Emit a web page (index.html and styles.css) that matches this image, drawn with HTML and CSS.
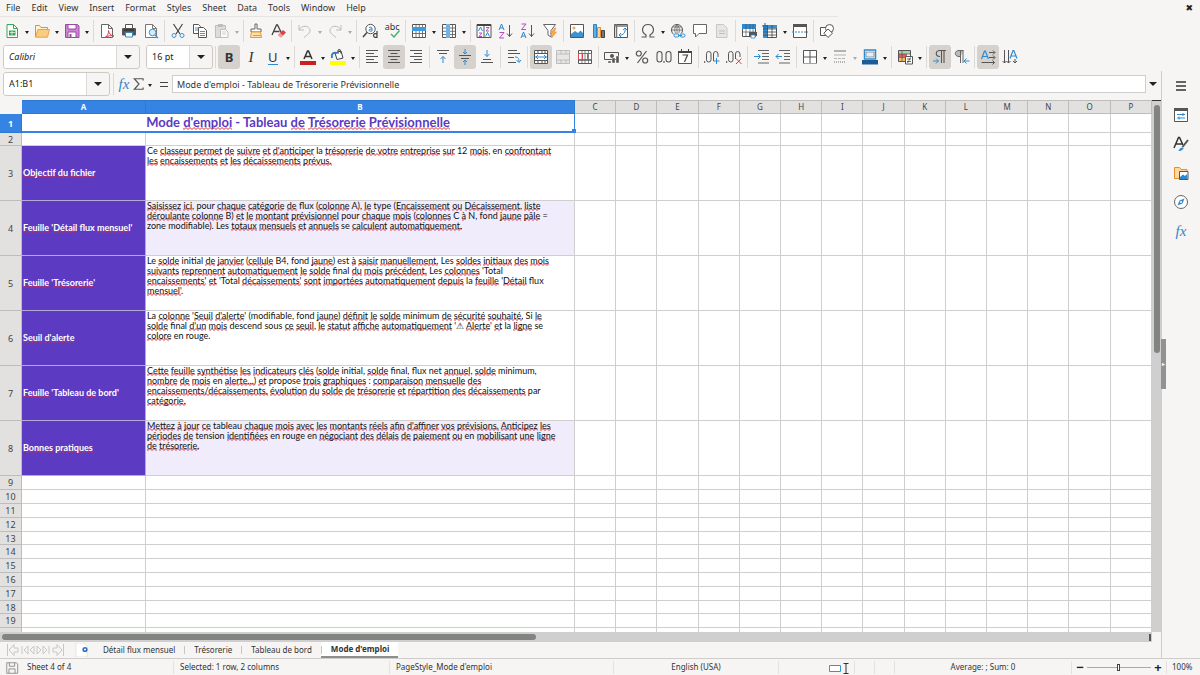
FILE: index.html
```html
<!DOCTYPE html>
<html lang="fr">
<head>
<meta charset="utf-8">
<title>Mode d'emploi - Tableau de Trésorerie Prévisionnelle</title>
<link rel="stylesheet" href="styles.css">
</head>
<body>
<nav class="menubar">
  <button>File</button><button>Edit</button><button>View</button><button>Insert</button><button>Format</button><button>Styles</button><button>Sheet</button><button>Data</button><button>Tools</button><button>Window</button><button>Help</button>
  <button class="close" aria-label="Close">✖</button>
</nav>

<div class="toolbar standard">
  <button class="tool" aria-label="New"><svg viewBox="0 0 16 16"><path d="M3 1.500h6.500l4 4v9H3z" fill="#fff" stroke="#36a852"/><path d="M9.500 1.500v4h4" fill="none" stroke="#36a852"/><path d="M5 7.500h6.500v5H5z" fill="#36a852"/><path d="M6 9.500h5M8 8v4" stroke="#fff" stroke-width=".7"/></svg></button><button class="drop" aria-label="New options"></button>
  <button class="tool" aria-label="Open"><svg viewBox="0 0 16 16"><path d="M1.500 14V2.500h4l1.500 2h6.500V7" fill="#fff3d6" stroke="#e0902f"/><path d="M1.500 14.200L4 6.500h11.500L13.500 14.200z" fill="#fbcb80" stroke="#eda144"/></svg></button><button class="drop" aria-label="Open options"></button>
  <button class="tool" aria-label="Save"><svg viewBox="0 0 16 16"><path d="M1.500 1.500h12l1.500 1.500v11.500H1.500z" fill="#cf83d6" stroke="#9a4aa5"/><path d="M4 1.500h8v4.500H4zM4 9h8v5.500H4z" fill="#fff" stroke="#9a4aa5"/><path d="M5.500 11h2v3.500h-2z" fill="#9a4aa5"/></svg></button><button class="drop" aria-label="Save options"></button>
  <i class="sep"></i>
  <button class="tool" aria-label="Export as PDF"><svg viewBox="0 0 16 16"><path d="M2.500 1.500h7l4 4v9h-11z" fill="#fff" stroke="#666"/><path d="M9.500 1.500v4h4" fill="none" stroke="#666"/><path d="M6 14.500c2-1 4-4 3.500-7 .5 3 2 5 5.500 5.500-3-.8-6-.2-9 1.500z" fill="#fff" stroke="#df3b4b"/></svg></button>
  <button class="tool" aria-label="Print"><svg viewBox="0 0 16 16"><path d="M4.500 1.500h7v4h-7z" fill="#fff" stroke="#555"/><rect x="1" y="5" width="14" height="7.500" rx="1" fill="#555"/><path d="M4.500 9.500h7v4.500h-7z" fill="#fff" stroke="#3f87b8"/><path d="M3 7h10" stroke="#222"/></svg></button>
  <button class="tool" aria-label="Print preview"><svg viewBox="0 0 16 16"><path d="M2.500 1.500h7l4 4v9h-11z" fill="#fff" stroke="#777"/><path d="M9.500 1.500v4h4" fill="none" stroke="#777"/><circle cx="9.500" cy="9.500" r="3.300" fill="#d5ebf8" stroke="#3f95cf"/><path d="M12 12l3 3" stroke="#3f95cf" stroke-width="1.300"/></svg></button>
  <i class="sep"></i>
  <button class="tool" aria-label="Cut"><svg viewBox="0 0 16 16" fill="none"><path d="M3.500 1l6.500 10M12.500 1L6 11" stroke="#444" stroke-width="1.200"/><circle cx="4" cy="12.500" r="2" stroke="#3a94d2"/><circle cx="12" cy="12.500" r="2" stroke="#3a94d2"/></svg></button>
  <button class="tool" aria-label="Copy"><svg viewBox="0 0 16 16"><path d="M1.500 1.500h5l2 2v7h-7z" fill="#fff" stroke="#555"/><path d="M3 5h3M3 7h3" stroke="#4a98cd"/><path d="M6.500 4.500h5l3 3v7h-8z" fill="#fff" stroke="#555"/><path d="M8 8.500h5M8 10.500h5M8 12.500h5" stroke="#4a98cd"/></svg></button>
  <button class="tool off" aria-label="Paste"><svg viewBox="0 0 16 16"><path d="M1.500 2.500h10v12h-10z" fill="#ccc" stroke="#999"/><path d="M4 1h5v3H4z" fill="#999"/><path d="M6.500 6.500h5l2.500 2.500v5.500H6.500z" fill="#fff" stroke="#999"/><path d="M8 9h4M8 11h4" stroke="#bbb"/></svg></button><button class="drop off" aria-label="Paste options"></button>
  <i class="sep"></i>
  <button class="tool" aria-label="Clone formatting"><svg viewBox="0 0 16 16"><path d="M7 1h2v5h4v3H3V6h4z" fill="#fff" stroke="#666"/><path d="M3.500 9l-1 5.500h11L12.500 9z" fill="#fde0b0" stroke="#ea9a38"/><path d="M5 12.500h8" stroke="#ea9a38"/></svg></button>
  <button class="tool" aria-label="Clear formatting"><svg viewBox="0 0 16 16"><path d="M2 12L6.500 2h1L12 11M3.500 8.500h6" fill="none" stroke="#444" stroke-width="1.300"/><path d="M8 12l5-5 3 2.500-5 5z" fill="#e33f47"/><path d="M8 12l2-2 3 2.500-2 2z" fill="#f3a0a5"/></svg></button>
  <i class="sep"></i>
  <button class="tool off" aria-label="Undo"><svg viewBox="0 0 16 16" fill="none" stroke="#999"><path d="M2 2v5h5M2 7c2.500-5 10-5 11 0 .5 3-3 5-6 7.500"/></svg></button><button class="drop off" aria-label="Undo options"></button>
  <button class="tool off" aria-label="Redo"><svg viewBox="0 0 16 16" fill="none" stroke="#999"><path d="M14 2v5H9M14 7C11.500 2 4 2 3 7c-.5 3 3 5 6 7.500"/></svg></button><button class="drop off" aria-label="Redo options"></button>
  <i class="sep"></i>
  <button class="tool" aria-label="Find and replace"><svg viewBox="0 0 16 16" fill="none"><circle cx="8.500" cy="6" r="4.700" fill="#fff" stroke="#555"/><path d="M5 9.500L1 14" stroke="#444" stroke-width="1.500"/><path d="M7 4.500c2-1 3 0 3 1V8C8 8.500 7 8 7 7s2-1 3-1" stroke="#2a7fc9"/><path d="M15 8v7M15 11.500c-1-1.500-3.500-1-3.500 1s2.500 2.500 3.500 1" stroke="#444" stroke-width="1.200"/></svg></button>
  <button class="tool" aria-label="Spelling"><span class="abc">abc</span><svg viewBox="0 0 16 16" class="tick"><path d="M7 11l3 3 5.500-6.500" fill="none" stroke="#41b263" stroke-width="1.400"/></svg></button>
  <i class="sep"></i>
  <button class="tool" aria-label="Row"><svg viewBox="0 0 16 16"><path d="M1.500 1.500h13v13h-13z" fill="#fff" stroke="#555"/><path d="M1.500 10.500h13M5 1.500v13M8.300 1.500v13M11.500 1.500v13" stroke="#555" stroke-width=".8"/><path d="M1 4h14v4H1z" fill="#3c9be0"/></svg></button><button class="drop" aria-label="Row options"></button>
  <button class="tool" aria-label="Column"><svg viewBox="0 0 16 16"><path d="M1.500 1.500h13v13h-13z" fill="#fff" stroke="#555"/><path d="M11.500 1.500v13M1.500 5h13M1.500 8.300h13M1.500 11.500h13" stroke="#555" stroke-width=".8"/><path d="M5 1h4v14H5z" fill="#6bb5ea"/></svg></button><button class="drop" aria-label="Column options"></button>
  <i class="sep"></i>
  <button class="tool" aria-label="Sort"><svg viewBox="0 0 16 16" fill="none"><path d="M1 1.500h14v13H1zM8 2v12" fill="#fff" stroke="#555"/><path d="M1 2h14" stroke="#444" stroke-width="2"/><path d="M2.500 8L4.500 4l2 4M9.500 13.500l2-4 2 4" stroke="#2e86cf"/><path d="M3 10h3L3 13.500h3M10 4.500h3l-3 3.500h3" stroke="#b44fbd"/></svg></button>
  <button class="tool" aria-label="Sort ascending"><svg viewBox="0 0 16 16" fill="none"><path d="M1 7l2.500-6L6 7M2 5h3" stroke="#2e86cf"/><path d="M1.500 9.500H6L1.500 15H6" stroke="#b44fbd"/><path d="M11.500 2v11.500M9 10.500l2.500 3 2.500-3" stroke="#555"/></svg></button>
  <button class="tool" aria-label="Sort descending"><svg viewBox="0 0 16 16" fill="none"><path d="M1.500 1H6L1.500 6.500H6" stroke="#b44fbd"/><path d="M1 15l2.500-6L6 15M2 13h3" stroke="#2e86cf"/><path d="M11.500 2v11.500M9 10.500l2.500 3 2.500-3" stroke="#555"/></svg></button>
  <button class="tool" aria-label="AutoFilter"><svg viewBox="0 0 16 16"><path d="M1.500 1.500h12L9 7.500V14l-3-2V7.500z" fill="#fff" stroke="#666"/><path d="M12.500 5L8.500 10.500h2.500L9.500 15l5-6h-2.500L14 5z" fill="#fba949" stroke="#e28724" stroke-width=".5"/></svg></button>
  <i class="sep"></i>
  <button class="tool" aria-label="Image"><svg viewBox="0 0 16 16"><path d="M1.500 1.500h13v13h-13z" fill="#fff" stroke="#555"/><circle cx="5" cy="5" r="1.500" fill="#f4a94a"/><path d="M2 14v-3l4-3 3 2 2.500-2.500L14 10v4z" fill="#3d93d2"/></svg></button>
  <button class="tool" aria-label="Chart"><svg viewBox="0 0 16 16"><path d="M2.500 1.500h3v13h-3z" fill="#60b0ea" stroke="#2f80c0"/><path d="M6.500 4.500h3v10h-3z" fill="#fbd09a" stroke="#e28b2b"/><path d="M10.500 7.500h3v7h-3z" fill="#777" stroke="#444"/></svg></button>
  <button class="tool" aria-label="Pivot table"><svg viewBox="0 0 16 16" fill="none"><path d="M1.500 1.500h13v13h-13z" fill="#fff" stroke="#555"/><path d="M1 3h14M3.500 1v14" stroke="#777" stroke-width="1.500"/><path d="M12 5c1 4-2 8-6 7M10 7l2-2 2 2M8 10l-2 2 2 2" stroke="#2e8bd0"/></svg></button>
  <i class="sep"></i>
  <button class="tool" aria-label="Special character"><svg viewBox="0 0 16 16"><path d="M1.500 14H6v-2C0 8.500 2.500 1.500 8 1.500s8 7 2 10.500v2h4.500" fill="none" stroke="#555" stroke-width="1.200"/></svg></button><button class="drop" aria-label="Special character options"></button>
  <button class="tool" aria-label="Hyperlink"><svg viewBox="0 0 16 16" fill="none"><circle cx="7" cy="7" r="5.500" stroke="#555"/><path d="M7 1.500c-3 3-3 8 0 11M7 1.500c3 3 3 7 1 10M1.500 7h11M2.500 4h9M7 1.500v11" stroke="#555" stroke-width=".7"/><path d="M3.500 10.500H15v4H3.500z" fill="#f5f4f2"/><rect x="4" y="11" width="5" height="3" rx="1.500" stroke="#2e8bd0"/><rect x="10" y="11" width="5" height="3" rx="1.500" stroke="#2e8bd0"/><path d="M8 12.500h4" stroke="#2e8bd0"/></svg></button>
  <button class="tool" aria-label="Comment"><svg viewBox="0 0 16 16"><path d="M1.500 1.500h13v9H7L3.500 14v-3.500h-2z" fill="#fff" stroke="#666"/></svg></button>
  <button class="tool off" aria-label="Headers and footers"><svg viewBox="0 0 16 16"><path d="M2.500 1.500h7l3.500 3.500v9.500H2.500z" fill="#ddd" stroke="#aaa"/><path d="M5 8h6M5 10.500h6" stroke="#999"/></svg></button>
  <i class="sep"></i>
  <button class="tool" aria-label="Print area"><svg viewBox="0 0 16 16"><path d="M1.500 1.500h13v12h-13z" fill="#fff" stroke="#555"/><path d="M1 1h14v5H1z" fill="#2e8bd0"/><path d="M1.500 9h13M5 1v12M9 1v12M12 1v9" stroke="#555" stroke-width=".7"/><rect x="8" y="9" width="8" height="4" fill="#555"/><path d="M10 12h4v3h-4z" fill="#fff" stroke="#3a8ed0" stroke-width=".8"/></svg></button>
  <button class="tool" aria-label="Freeze"><svg viewBox="0 0 16 16"><path d="M1.500 2.500h13v12h-13z" fill="#fff" stroke="#555"/><path d="M1 2h14v3.500H5.500V15H1z" fill="#3591da"/><path d="M5.500 2v13M10 2v13M1 6h14M1 9h14M1 12h14" stroke="#444" stroke-width=".8"/><path d="M3 0v6M0 3h6" stroke="#1769aa"/></svg></button><button class="drop" aria-label="Freeze options"></button>
  <button class="tool" aria-label="Split window"><svg viewBox="0 0 16 16"><path d="M1.500 1.500h13v13h-13z" fill="#fff" stroke="#555"/><path d="M1 2.500h14" stroke="#555" stroke-width="3"/><path d="M0 9h16" stroke="#2e8bd0" stroke-dasharray="2 1"/></svg></button>
  <i class="sep"></i>
  <button class="tool" aria-label="Draw functions"><svg viewBox="0 0 16 16" fill="#fff" stroke="#555"><path d="M1.500 4.500h9v8h-9z"/><circle cx="10.500" cy="5.500" r="4"/><path d="M9 6l4.500 4.200L9 14.500 4.800 10.200z"/></svg></button>
</div>

<div class="toolbar formatting">
  <div class="combo font-name"><input aria-label="Font name" value="Calibri"><button class="more" aria-label="Font list"></button></div>
  <div class="combo font-size"><input aria-label="Font size" value="16 pt"><button class="more" aria-label="Size list"></button></div>
  <i class="sep"></i>
  <div class="format-tools">
  <button class="tool on" aria-label="Bold"><b class="letter">B</b></button>
  <button class="tool" aria-label="Italic"><em class="letter serif">I</em></button>
  <button class="tool" aria-label="Underline"><span class="letter under">U</span></button><button class="drop" aria-label="Underline options"></button>
  <i class="sep"></i>
  <button class="tool" aria-label="Font color"><svg viewBox="0 0 16 16"><path d="M4 10L7.500 2h1L12 10M5 7.500h6" fill="none" stroke="#333" stroke-width="1.500"/><path d="M0 12h16v4H0z" fill="#c9211e"/></svg></button><button class="drop" aria-label="Font color options"></button>
  <button class="tool" aria-label="Highlighting"><svg viewBox="0 0 16 16"><path d="M5 4l6-2 2 7-6 1.500z" fill="#fff" stroke="#444"/><path d="M2 9c-1-4 1-6 5-5" fill="none" stroke="#2e7fc6" stroke-width="2"/><path d="M8 5V1l2-.5 1 4" fill="none" stroke="#444"/><path d="M0 12h16v4H0z" fill="#ffff00"/></svg></button><button class="drop" aria-label="Highlighting options"></button>
  <i class="sep"></i>
  <button class="tool" aria-label="Align left"><svg viewBox="0 0 16 16"><path d="M2 1.500h12M2 4.500h8M2 7.500h12M2 10.500h8M2 13.500h12" stroke="#555"/></svg></button>
  <button class="tool on" aria-label="Center"><svg viewBox="0 0 16 16"><path d="M2 1.500h12M4.500 4.500h7M2 7.500h12M4.500 10.500h7M2 13.500h12" stroke="#555"/></svg></button>
  <button class="tool" aria-label="Align right"><svg viewBox="0 0 16 16"><path d="M2 1.500h12M6 4.500h8M2 7.500h12M6 10.500h8M2 13.500h12" stroke="#555"/></svg></button>
  <i class="sep"></i>
  <button class="tool" aria-label="Align top"><svg viewBox="0 0 16 16" fill="none"><path d="M2 1.500h12M4 4.500h8" stroke="#555"/><path d="M8 14V7.500M5.500 10L8 7.500l2.500 2.500" stroke="#2e8bd0"/></svg></button>
  <button class="tool on" aria-label="Center vertically"><svg viewBox="0 0 16 16" fill="none"><path d="M2 6.500h12M4 9.500h8" stroke="#555"/><path d="M8 0v5M6 3l2 2 2-2M8 16v-5M6 13l2-2 2 2" stroke="#2e8bd0"/></svg></button>
  <button class="tool" aria-label="Align bottom"><svg viewBox="0 0 16 16" fill="none"><path d="M4 10.500h8M2 13.500h12" stroke="#555"/><path d="M8 1v6.500M5.500 5L8 7.500 10.500 5" stroke="#2e8bd0"/></svg></button>
  <i class="sep"></i>
  <button class="tool" aria-label="Wrap text"><svg viewBox="0 0 16 16" fill="none"><path d="M2 1.500h9M2 4.500h12M2 8.500h6M2 13.500h8" stroke="#555"/><path d="M9 8c3 0 4 1 4 5M10.500 11l2.500 2.500 2-2.500" stroke="#2e8bd0"/></svg></button>
  <i class="sep"></i>
  <button class="tool on" aria-label="Merge and center"><svg viewBox="0 0 16 16" fill="none"><path d="M1.500 1.500h13v13h-13z" fill="#fff" stroke="#555"/><path d="M2 4.500h12M2 11.500h12M5 2v3M9 2v3M12 2v3M5 11v3M9 11v3M12 11v3" stroke="#555"/><path d="M2 8h12M5 6L3 8l2 2M11 6l2 2-2 2" stroke="#2e8bd0"/></svg></button>
  <button class="tool off" aria-label="Merge cells"><svg viewBox="0 0 16 16"><path d="M1.500 1.500h13v13h-13z" fill="#ddd" stroke="#999"/><path d="M2 5h12M2 11h12M6 2v3M11 2v3M6 11v3M11 11v3" stroke="#999"/></svg></button>
  <button class="tool" aria-label="Unmerge cells"><svg viewBox="0 0 16 16"><path d="M1.500 1.500h13v13h-13z" fill="#fff" stroke="#555"/><path d="M5 2v12M8 2v12M11.500 2v12M2 11.500h12" stroke="#555" stroke-width=".7"/><path d="M1.500 4.500h13v6h-13zM5.500 5v5M10.500 5v5" fill="none" stroke="#df4850"/></svg></button>
  <i class="sep"></i>
  <button class="tool" aria-label="Currency"><svg viewBox="0 0 16 16" fill="none"><path d="M.500 3.500h14v7H.500z" stroke="#555"/><circle cx="8" cy="7" r="2" fill="#555"/><path d="M4 12h3v2H4zM8 9h3v5H8zM12 7h3v7h-3z" fill="#555" stroke="#fff" stroke-width=".4"/></svg></button><button class="drop" aria-label="Currency options"></button>
  <button class="tool" aria-label="Percent"><svg viewBox="0 0 16 16" fill="none" stroke="#555" stroke-width="1.200"><circle cx="4.800" cy="4.500" r="2.500"/><circle cx="11.200" cy="11.500" r="2.500"/><path d="M12.500 2l-9 12"/></svg></button>
  <button class="tool" aria-label="Number"><svg viewBox="0 0 16 16" fill="none" stroke="#555" stroke-width="1.100"><rect x="1" y="2.500" width="5" height="10.500" rx="2.500"/><rect x="10" y="2.500" width="5" height="10.500" rx="2.500"/><path d="M8 12v2"/></svg></button>
  <button class="tool" aria-label="Date"><svg viewBox="0 0 16 16" fill="none"><path d="M1.500 2.500h13v12h-13z" fill="#fff" stroke="#555"/><path d="M1 3h14" stroke="#444" stroke-width="2"/><path d="M4.500 0v3M11.500 0v3" stroke="#444"/><path d="M5.500 6h5L7.500 13" stroke="#444" stroke-width="1.200"/></svg></button>
  <i class="sep"></i>
  <button class="tool" aria-label="Add decimal place"><svg viewBox="0 0 16 16" fill="none"><path d="M.700 12v2" stroke="#555"/><rect x="2.500" y="2.500" width="4.500" height="10.500" rx="2.200" stroke="#555"/><path d="M9.500 12V5q0-2.500 2.200-2.500T14 5v3" stroke="#555"/><path d="M12.500 9v6M9.500 12h6" stroke="#2e8bd0"/></svg></button>
  <button class="tool" aria-label="Delete decimal place"><svg viewBox="0 0 16 16" fill="none"><path d="M.700 12v2" stroke="#555"/><rect x="2.500" y="2.500" width="4.500" height="10.500" rx="2.200" stroke="#555"/><path d="M9.500 10V5q0-2.500 2.200-2.500T14 5v3" stroke="#555"/><path d="M10 9.500l5.500 5.500M15.500 9.500L10 15" stroke="#df3b44"/></svg></button>
  <i class="sep"></i>
  <button class="tool" aria-label="Increase indent"><svg viewBox="0 0 16 16" fill="none"><path d="M5 1.500h11M9 4.500h7M9 7.500h7M9 10.500h7M5 14h11" stroke="#666"/><path d="M1 7.500h6M5 5l2.500 2.500L5 10" stroke="#2e8bd0"/></svg></button>
  <button class="tool" aria-label="Decrease indent"><svg viewBox="0 0 16 16" fill="none"><path d="M4 1.500h11M9 4.500h6M9 7.500h6M9 10.500h6M4 14h11" stroke="#666"/><path d="M7 7.500H1M3.500 5L1 7.500 3.500 10" stroke="#2e8bd0"/></svg></button>
  <i class="sep"></i>
  <button class="tool" aria-label="Borders"><svg viewBox="0 0 16 16"><path d="M1.500 1.500h13v13h-13zM8 2v12M2 8h12" fill="#fff" stroke="#555"/><path d="M1 14.500h14" stroke="#e99442"/></svg></button><button class="drop" aria-label="Borders options"></button>
  <button class="tool off" aria-label="Border style"><svg viewBox="0 0 16 16"><path d="M2 2h12" stroke="#888" stroke-width="2"/><path d="M2 6h12" stroke="#888"/><path d="M2 9.500h12" stroke="#888" stroke-dasharray="3 1"/><path d="M2 13h12" stroke="#888" stroke-width="2" stroke-dasharray="1 1"/></svg></button><button class="drop off" aria-label="Border style options"></button>
  <button class="tool" aria-label="Border color"><svg viewBox="0 0 16 16"><path d="M2.500 1h11v9h-11z" fill="#fff" stroke="#2e8bd0" stroke-width="1.500"/><path d="M4 3h8v5H4z" fill="#e4eef5" stroke="#777" stroke-width=".7"/><path d="M0 11h16v4.500H0z" fill="#1e5c97"/></svg></button><button class="drop" aria-label="Border color options"></button>
  <i class="sep"></i>
  <button class="tool" aria-label="Conditional formatting"><svg viewBox="0 0 16 16"><path d="M1.500 1.500h12v11h-12z" fill="#fff" stroke="#555"/><path d="M2 2h11v3H2z" fill="#9dd8ac"/><path d="M2 5h8v3H2z" fill="#e7585d"/><path d="M2 8h6v4H2z" fill="#f6b968"/><path d="M1.500 5h12M1.500 8.500h8M5 2v10" stroke="#555" stroke-width=".7"/><path d="M8.500 7.500h7v7.500h-7z" fill="#fff" stroke="#555"/><path d="M10 10h4M10 12.500h4M13.500 8.500l-3 5.500" stroke="#444" stroke-width=".8"/></svg></button><button class="drop" aria-label="Conditional formatting options"></button>
  <i class="sep"></i>
  <button class="tool on" aria-label="Left to right"><svg viewBox="0 0 16 16" fill="none"><path d="M14 1.500H8c-5 0-5 6 0 6M9.500 1.500V14M12 1.500V14" stroke="#555" stroke-width="1.100"/><path d="M1 12h5.500M4 9.500L6.500 12 4 14.500" stroke="#2e8bd0"/></svg></button>
  <button class="tool" aria-label="Right to left"><svg viewBox="0 0 16 16" fill="none"><path d="M9.500 1.500H5c-5 0-5 6 0 6h1.500" fill="#bbb" stroke="#666"/><path d="M6.500 1.500V14M9 1.500V14" stroke="#666"/><path d="M15.500 12H10M12.500 9.500L10 12l2.500 2.500" stroke="#2e8bd0"/></svg></button>
  <i class="sep"></i>
  <button class="tool on" aria-label="Horizontal text"><svg viewBox="0 0 16 16" fill="none"><path d="M1.500 10L4.500 2h.8L8.500 10M2.500 7.500h5" stroke="#2e8bd0" stroke-width="1.200"/><path d="M9 3.500h5.500M13 1.500l2 2-2 2M9 8.500h5.500M13 6.500l2 2-2 2M1.500 13.500h13M12.500 11.500l2 2-2 2" stroke="#555"/></svg></button>
  <button class="tool" aria-label="Vertical text"><svg viewBox="0 0 16 16" fill="none"><path d="M8 9.500L11 1.500h.8L15 9.500M9 7h5" stroke="#2e8bd0" stroke-width="1.200"/><path d="M2.500 1v13M.500 12l2 2 2-2M6.500 1v13M4.500 12l2 2 2-2M13 10v4M11 12l2 2 2-2" stroke="#555"/></svg></button>
  </div>
</div>

<div class="work">
  <div class="document">
    <div class="formula-bar">
      <div class="combo name-box"><input aria-label="Name box" value="A1:B1"><button class="more" aria-label="Name list"></button></div>
      <i class="sep"></i>
      <button class="fx" aria-label="Function wizard">fx</button>
      <button class="sigma" aria-label="Select function"><svg viewBox="0 0 12 12"><path d="M9.500 3V1.500H2L6 6 2 10.500h7.500V9" fill="none" stroke="#555"/></svg></button><button class="drop" aria-label="Function options"></button>
      <button class="equals" aria-label="Formula"></button>
      <input class="formula" aria-label="Formula input" value="Mode d'emploi - Tableau de Trésorerie Prévisionnelle">
      <button class="more" aria-label="Expand formula bar"></button>
    </div>
    <div class="sheet-area">
      <div class="sheet">
        <table class="grid">
          <colgroup><col class="c-head"><col class="c-a"><col class="c-b"><col span="14"></colgroup>
          <thead><tr><th></th><th class="sel">A</th><th class="sel">B</th><th>C</th><th>D</th><th>E</th><th>F</th><th>G</th><th>H</th><th>I</th><th>J</th><th>K</th><th>L</th><th>M</th><th>N</th><th>O</th><th>P</th></tr></thead>
          <tbody>
          <tr class="r-title"><th class="sel">1</th><td class="title" colspan="2">Mode <u>d'emploi</u> - Tableau <u>de</u> <u>Trésorerie</u> <u>Prévisionnelle</u></td><td><td><td><td><td><td><td><td><td><td><td><td><td><td></tr>
          <tr class="r-gap"><th>2</th><td><td><td><td><td><td><td><td><td><td><td><td><td><td><td><td></tr>
          <tr class="r-text"><th>3</th><td class="key"><u>Objectif</u> <u>du</u> <u>fichier</u></td><td class="text">Ce <u>classeur</u> <u>permet</u> <u>de</u> <u>suivre</u> <u>et</u> <u>d'anticiper</u> la <u>trésorerie</u> <u>de votre</u> <u>entreprise</u> <u>sur</u> 12 <u>mois</u>, en <u>confrontant</u><br><u>les</u> <u>encaissements</u> <u>et</u> <u>les</u> <u>décaissements</u> <u>prévus.</u></td><td><td><td><td><td><td><td><td><td><td><td><td><td><td></tr>
          <tr class="r-text alt"><th>4</th><td class="key"><u>Feuille</u> '<u>Détail</u> flux <u>mensuel</u>'</td><td class="text"><u>Saisissez</u> <u>ici</u>, pour <u>chaque</u> <u>catégorie</u> <u>de</u> flux (<u>colonne</u> A), <u>le</u> type (<u>Encaissement</u> <u>ou</u> <u>Décaissement</u>, <u>liste</u><br><u>déroulante</u> <u>colonne</u> B) <u>et</u> <u>le</u> <u>montant</u> <u>prévisionnel</u> pour <u>chaque</u> <u>mois</u> (<u>colonnes</u> C <u>à</u> N, fond <u>jaune</u> <u>pâle</u> =<br>zone modifiable). Les <u>totaux</u> <u>mensuels</u> <u>et</u> <u>annuels</u> se <u>calculent</u> <u>automatiquement.</u></td><td><td><td><td><td><td><td><td><td><td><td><td><td><td></tr>
          <tr class="r-text"><th>5</th><td class="key"><u>Feuille</u> '<u>Trésorerie</u>'</td><td class="text">Le <u>solde</u> initial <u>de</u> <u>janvier</u> (<u>cellule</u> B4, fond <u>jaune</u>) est <u>à</u> <u>saisir</u> <u>manuellement.</u> Les <u>soldes</u> <u>initiaux</u> <u>des</u> <u>mois</u><br><u>suivants</u> <u>reprennent</u> <u>automatiquement</u> <u>le</u> <u>solde</u> final <u>du</u> <u>mois</u> <u>précédent.</u> Les <u>colonnes</u> 'Total<br><u>encaissements'</u> <u>et</u> 'Total <u>décaissements'</u> <u>sont</u> <u>importées</u> <u>automatiquement</u> <u>depuis</u> la <u>feuille</u> '<u>Détail</u> flux<br><u>mensuel'</u>.</td><td><td><td><td><td><td><td><td><td><td><td><td><td><td></tr>
          <tr class="r-text"><th>6</th><td class="key"><u>Seuil</u> <u>d'alerte</u></td><td class="text">La <u>colonne</u> '<u>Seuil</u> <u>d'alerte</u>' (modifiable, fond <u>jaune</u>) <u>définit</u> <u>le</u> <u>solde</u> minimum <u>de</u> <u>sécurité</u> <u>souhaité.</u> Si <u>le</u><br><u>solde</u> final <u>d'un</u> <u>mois</u> descend sous <u>ce</u> <u>seuil</u>, <u>le</u> <u>statut</u> <u>affiche</u> <u>automatiquement</u> '⚠ <u>Alerte</u>' <u>et</u> la <u>ligne</u> se<br><u>colore</u> en rouge.</td><td><td><td><td><td><td><td><td><td><td><td><td><td><td></tr>
          <tr class="r-text"><th>7</th><td class="key"><u>Feuille</u> 'Tableau <u>de</u> bord'</td><td class="text"><u>Cette</u> <u>feuille</u> <u>synthétise</u> <u>les</u> <u>indicateurs</u> <u>clés</u> (<u>solde</u> initial, <u>solde</u> final, flux net <u>annuel</u>, <u>solde</u> minimum,<br><u>nombre</u> <u>de</u> <u>mois</u> en <u>alerte...</u>) <u>et</u> propose <u>trois</u> <u>graphiques</u> : <u>comparaison</u> <u>mensuelle</u> <u>des</u><br><u>encaissements/décaissements,</u> <u>évolution</u> <u>du</u> <u>solde</u> <u>de</u> <u>trésorerie</u> <u>et</u> <u>répartition</u> <u>des</u> <u>décaissements</u> par<br><u>catégorie.</u></td><td><td><td><td><td><td><td><td><td><td><td><td><td><td></tr>
          <tr class="r-text alt"><th>8</th><td class="key"><u>Bonnes</u> <u>pratiques</u></td><td class="text"><u>Mettez</u> <u>à</u> <u>jour</u> <u>ce</u> tableau <u>chaque</u> <u>mois</u> <u>avec</u> <u>les</u> <u>montants</u> <u>réels</u> <u>afin</u> <u>d'affiner</u> <u>vos</u> <u>prévisions.</u> <u>Anticipez</u> <u>les</u><br><u>périodes</u> <u>de</u> tension <u>identifiées</u> en rouge en <u>négociant</u> <u>des</u> <u>délais</u> <u>de</u> <u>paiement</u> <u>ou</u> en <u>mobilisant</u> <u>une</u> <u>ligne</u><br><u>de</u> <u>trésorerie.</u></td><td><td><td><td><td><td><td><td><td><td><td><td><td><td></tr>
          </tbody>
          <tbody class="empty">
          <tr><th>9</th><td><td><td><td><td><td><td><td><td><td><td><td><td><td><td><td></tr>
          <tr><th>10</th><td><td><td><td><td><td><td><td><td><td><td><td><td><td><td><td></tr>
          <tr><th>11</th><td><td><td><td><td><td><td><td><td><td><td><td><td><td><td><td></tr>
          <tr><th>12</th><td><td><td><td><td><td><td><td><td><td><td><td><td><td><td><td></tr>
          <tr><th>13</th><td><td><td><td><td><td><td><td><td><td><td><td><td><td><td><td></tr>
          <tr><th>14</th><td><td><td><td><td><td><td><td><td><td><td><td><td><td><td><td></tr>
          <tr><th>15</th><td><td><td><td><td><td><td><td><td><td><td><td><td><td><td><td></tr>
          <tr><th>16</th><td><td><td><td><td><td><td><td><td><td><td><td><td><td><td><td></tr>
          <tr><th>17</th><td><td><td><td><td><td><td><td><td><td><td><td><td><td><td><td></tr>
          <tr><th>18</th><td><td><td><td><td><td><td><td><td><td><td><td><td><td><td><td></tr>
          <tr><th>19</th><td><td><td><td><td><td><td><td><td><td><td><td><td><td><td><td></tr>
          <tr><th></th><td><td><td><td><td><td><td><td><td><td><td><td><td><td><td><td></tr>
          </tbody>
        </table>
      </div>
      <div class="vscroll"><div class="thumb"></div></div>
    </div>
    <div class="hscroll"><div class="thumb"></div><i class="split"></i></div>
    <div class="tabs">
      <div class="tab-nav">
        <button aria-label="First sheet"><svg viewBox="0 0 14 14"><path d="M1.500 1v12M12 5H8V1.500L3 7l5 5.500V9h4z"/></svg></button>
        <button aria-label="Previous sheet"><svg viewBox="0 0 14 14"><path d="M1 3v8M7 3L3 7l4 4zM13 3L9 7l4 4z"/></svg></button>
        <button aria-label="Next sheet"><svg viewBox="0 0 14 14"><path d="M1 3l4 4-4 4zM7 3l4 4-4 4zM13 3v8"/></svg></button>
        <button aria-label="Last sheet"><svg viewBox="0 0 14 14"><path d="M12.500 1v12M2 5h4V1.500L11 7l-5 5.500V9H2z"/></svg></button>
      </div>
      <button class="add-sheet" aria-label="Add sheet"><svg viewBox="0 0 14 14"><path d="M1 0h8l3 3v11H1z" fill="#fff" stroke="#ccc" stroke-width=".5"/><circle cx="10" cy="6.500" r="1.800" fill="#fff" stroke="#2a6fc0" stroke-width="1.600"/></svg></button>
      <button class="tab">Détail flux mensuel</button>
      <button class="tab">Trésorerie</button>
      <button class="tab">Tableau de bord</button>
      <button class="tab active">Mode d'emploi</button>
    </div>
  </div>
  <aside class="sidebar">
    <button aria-label="Sidebar settings"><svg viewBox="0 0 16 16"><path d="M3 4h10M3 8h10M3 12h10" stroke="#333" stroke-width="1.300"/></svg></button>
    <button aria-label="Properties"><svg viewBox="0 0 16 16" fill="none"><path d="M1.500 1.500h13v13h-13z" fill="#fff" stroke="#555"/><path d="M1 2.500h14" stroke="#555" stroke-width="3"/><path d="M4 7.500h8M4 11h8M10 6v3M6 9.500v3" stroke="#2e8bd0"/></svg></button>
    <button aria-label="Styles"><svg viewBox="0 0 16 16" fill="none"><path d="M1 12L5.500 1.500h1L10 9M3 8h6" stroke="#333" stroke-width="1.500"/><path d="M15 4l-5.500 7" stroke="#555" stroke-width="2"/><path d="M5 15c1 0 2-4 4.500-3.500S9 15.500 5 15z" fill="#2e8bd0"/></svg></button>
    <button aria-label="Gallery"><svg viewBox="0 0 16 16"><path d="M1.500 13.500v-11h5l1.500 2h6v9z" fill="#fdd8a0" stroke="#e59030"/><path d="M6.500 6.500h8.500v8H6.500z" fill="#fff" stroke="#555"/><path d="M7 14v-2l3-2.500 2 1.500 2-2 .5 5z" fill="#2e8bd0"/></svg></button>
    <button aria-label="Navigator"><svg viewBox="0 0 16 16"><circle cx="8" cy="8" r="6.500" fill="#fff" stroke="#666"/><path d="M11.500 4.500L9.500 9.500l-5 2 2-5z" fill="#2e8bd0"/><circle cx="8" cy="8" r="1" fill="#fff"/></svg></button>
    <button class="fx" aria-label="Functions">fx</button>
    <button class="handle" aria-label="Hide sidebar">▸</button>
  </aside>
</div>

<footer class="status">
  <span class="s-save"><svg viewBox="0 0 16 16" fill="none" stroke="#888"><path d="M2 2h11l1.500 1.500V14H2zM5 2v4h6V2M4.500 14V9h7v5"/></svg></span>
  <span class="s-sheet">Sheet 4 of 4</span>
  <span class="s-selection">Selected: 1 row, 2 columns</span>
  <span class="s-style">PageStyle_Mode d'emploi</span>
  <span class="s-lang">English (USA)</span>
  <span class="s-mode"><svg viewBox="0 0 20 14" fill="none"><path d="M.500 4.500h11v6H.500z" fill="#fff" stroke="#3a94cd"/><path d="M14.500 2.500h5M17 2.500v10M14.500 12.500h5" stroke="#333"/></svg></span>
  <span class="s-blank"></span><span class="s-blank"></span>
  <span class="s-sum">Average: ; Sum: 0</span>
  <span class="s-zoom"><button aria-label="Zoom out">−</button><input type="range" min="0" max="100" value="49" aria-label="Zoom"><button aria-label="Zoom in">+</button></span>
  <span class="s-percent">100%</span>
</footer>
</body>
</html>
```
FILE: styles.css
```css
* { box-sizing: border-box; }
html, body { height: 100%; }
body {
  margin: 0;
  display: flex;
  flex-direction: column;
  overflow: hidden;
  background: #f6f5f4;
  color: #333;
  font: 8px/12px "Noto Sans", "Open Sans", sans-serif;
}
button, input {
  margin: 0;
  padding: 0;
  border: 0;
  background: none;
  color: inherit;
  font: inherit;
}
input { min-width: 0; outline: 0; }
svg { display: block; }

/* Menu bar */
.menubar {
  flex: none;
  display: flex;
  align-items: center;
  gap: 11px;
  height: 16px;
  padding: 0 7px 0 6px;
  font-size: 9px;
}
.menubar .close { margin-left: auto; font: 9px/12px "DejaVu Sans", sans-serif; color: #222; }

/* Toolbars */
.toolbar { flex: none; display: flex; align-items: center; }
.standard { height: 28px; max-width: 838px; padding-left: 1px; border-top: 1px solid #e6e4e2; }
.formatting { height: 27px; padding: 0 0 1px 3px; }
.format-tools { flex: 0 1 803px; display: flex; align-items: center; min-width: 0; }
.tool {
  position: relative;
  flex: 0 1 22px;
  min-width: 0;
  height: 24px;
  display: flex;
  align-items: center;
  justify-content: center;
  border-radius: 3px;
}
.tool svg { flex: none; width: 16px; height: 16px; }
.tool.on { background: #d5d1cd; }
.tool.off { opacity: .6; }
.drop, .more { display: flex; align-items: center; justify-content: center; }
.drop { flex: 0 1 8px; height: 24px; }
.drop::before, .more::before { content: ""; border: solid transparent; border-top-color: #222; }
.drop::before { margin-top: 3px; border-width: 3px 2px 0; }
.more::before { border-width: 4px 4px 0; }
.drop.off { opacity: .35; }
.sep { flex: 0 1 3px; height: 22px; margin-left: 2px; border-left: 1px solid #dcdad8; }
.abc { position: absolute; top: 2px; font-size: 9px; color: #333; }
.letter { font-size: 13px; line-height: 16px; color: #333; }
.serif { font-family: "Liberation Serif", serif; font-size: 15px; }
.under { border-bottom: 1px solid #2e8bd0; line-height: 14px; }

.combo {
  flex: none;
  display: flex;
  height: 24px;
  border: 1px solid #cdc9c5;
  border-radius: 3px;
  overflow: hidden;
  font-size: 9px;
  color: #222;
}
.combo input { flex: 1; padding-left: 5px; background: #fff; }
.combo .more { flex: none; width: 23px; border-left: 1px solid #dcdad8; }
.font-name { width: 137px; margin-right: 6px; }
.font-name input { font-style: italic; }
.font-size { width: 67px; }

/* Document area */
.work { flex: 1; display: flex; min-height: 0; }
.document { flex: 1; min-width: 0; display: flex; flex-direction: column; }
.formula-bar { flex: none; display: flex; align-items: center; height: 29px; padding: 0 1px 3px 3px; }
.name-box { width: 107px; margin-right: 1px; }
.fx { font: italic 15px/18px "Liberation Serif", serif; color: #2e86c9; }
.formula-bar .fx { width: 16px; }
.sigma { width: 14px; }
.sigma svg { width: 14px; height: 14px; }
.equals { width: 8px; height: 5px; margin: 0 4px 0 6px; border: solid #444; border-width: 1px 0; }
.formula { flex: 1; height: 18px; padding-left: 4px; background: #fff; border: 1px solid #d0cecc; font-size: 9px; }
.formula-bar > .more { width: 14px; }

.sheet-area { flex: 1; display: flex; min-height: 0; }
.sheet { flex: 1; min-width: 0; overflow: hidden; background: #fff; }
.grid { width: 100%; table-layout: fixed; border-collapse: separate; border-spacing: 0; }
.c-head { width: 22px; }
.c-a { width: 124px; }
.c-b { width: 429px; }
.grid th, .grid td { height: 14px; padding: 0; border: solid #cfcfcf; border-width: 0 1px 1px 0; line-height: 12px; }
.grid th { background: #e2e1df; border-color: #bdbdbd; font-weight: 400; font-size: 9px; color: #444; }
.grid thead th { font-size: 8px; border-top: 1px solid #bdbdbd; }
.grid tbody th { padding-top: 1px; }
.grid thead th:first-child { background: #f6f5f4; border-color: #f6f5f4; }
.grid th.sel { background: #3584e4; border-color: #2f78cf; color: #fff; font-weight: 700; }
.grid .r-title > * { height: 19px; }
.grid .r-gap > * { height: 13px; line-height: 11px; }
.grid .r-text > * { height: 55px; }
.empty tr:nth-child(5n) > * { height: 13px; line-height: 11px; }
.grid .title {
  position: relative;
  border: solid #3584e4;
  border-width: 0 1px 2px 0;
  color: #5b3ac2;
  font: 700 13px/15px Lato, sans-serif;
  text-align: center;
  white-space: nowrap;
}
.title::after { content: ""; position: absolute; right: -2px; bottom: -2px; width: 4px; height: 4px; background: #3584e4; }
.grid .key { background: #5c3ac1; padding-left: 1px; color: #fff; font: 700 9px/10px Lato, sans-serif; white-space: nowrap; border-color: #b5a8dc; }
.grid .text { padding-left: 1px; vertical-align: top; color: #111; font: 9px/10px Lato, sans-serif; white-space: nowrap; }
.alt .text { background: #f0ecfb; }

/* Spelling squiggle */
u {
  text-decoration: none;
  background: url("data:image/svg+xml,%3Csvg xmlns='http://www.w3.org/2000/svg' width='4' height='3'%3E%3Cpath d='M-1 .5L1 2.500 3 .5 5 2.500' fill='none' stroke='%23e02b36'/%3E%3C/svg%3E") left bottom / 4px 3px repeat-x;
}

.vscroll { flex: none; width: 9px; padding: 4px 1px 0 2px; background: #cfcfcf; border-top: 1px solid #333; }
.vscroll .thumb { height: 47%; border-radius: 3px; background: #828482; }
.hscroll { flex: none; display: flex; align-items: center; justify-content: space-between; height: 10px; margin-right: 9px; padding: 0 1px 0 2px; background: #cfcfcf; }
.hscroll .thumb { flex: 0 0 534px; height: 6px; border-radius: 3px; background: #828482; }
.split { width: 2px; height: 7px; background: #555; }

/* Sheet tabs */
.tabs { flex: none; display: flex; height: 16px; align-items: stretch; }
.tab-nav { display: flex; align-items: center; padding-left: 6px; width: 75px; }
.tab-nav button { width: 15px; }
.tab-nav svg { width: 14px; height: 14px; fill: none; stroke: #c9c7c5; }
.add-sheet { width: 18px; }
.add-sheet svg { width: 14px; height: 14px; }
.tab { position: relative; padding: 0 9px 0 10px; }
.tab + .tab::before { content: ""; position: absolute; left: 0; top: 4px; height: 8px; border-left: 1px solid #c8c6c4; }
.tab.active { background: #fff; border-bottom: 2px solid #8e8e8e; font-weight: 700; }

/* Sidebar */
.sidebar { position: relative; flex: none; width: 39px; display: flex; flex-direction: column; align-items: center; gap: 11px; padding-top: 6px; border-left: 1px solid #cfcdcb; }
.sidebar button { height: 18px; }
.sidebar svg { width: 16px; height: 16px; }
.sidebar .handle { position: absolute; left: -1px; top: 268px; width: 5px; height: 50px; background: #929292; color: #fff; font-size: 6px; line-height: 50px; }

/* Status bar */
.status { flex: none; display: flex; align-items: center; height: 17px; border-top: 1px solid #cfcdcb; }
.status > span { height: 13px; border-right: 1px solid #e4e2e0; }
.status svg { height: 14px; }
.s-save { width: 24px; padding-left: 5px; }
.status .s-save { border: 0; }
.s-sheet { width: 150px; padding-left: 3px; }
.s-selection { width: 216px; padding-left: 6px; }
.s-style { width: 224px; padding-left: 6px; }
.s-lang { width: 165px; text-align: center; }
.s-mode { width: 76px; padding-left: 50px; }
.s-blank { width: 20px; }
.s-sum { flex: 1; text-align: center; }
.s-zoom { width: 95px; display: flex; align-items: center; justify-content: space-between; padding: 0 4px; }
.s-zoom button { width: 8px; font-size: 13px; font-weight: 700; line-height: 12px; color: #222; }
.s-zoom input { width: 64px; height: 12px; appearance: none; background: linear-gradient(#aaa, #aaa) center / 100% 1px no-repeat; }
.s-zoom input::-webkit-slider-thumb { appearance: none; width: 3px; height: 7px; background: #fff; border: 1px solid #444; }
.s-percent { width: 33px; padding-left: 5px; }
.status .s-percent { border: 0; }
```
